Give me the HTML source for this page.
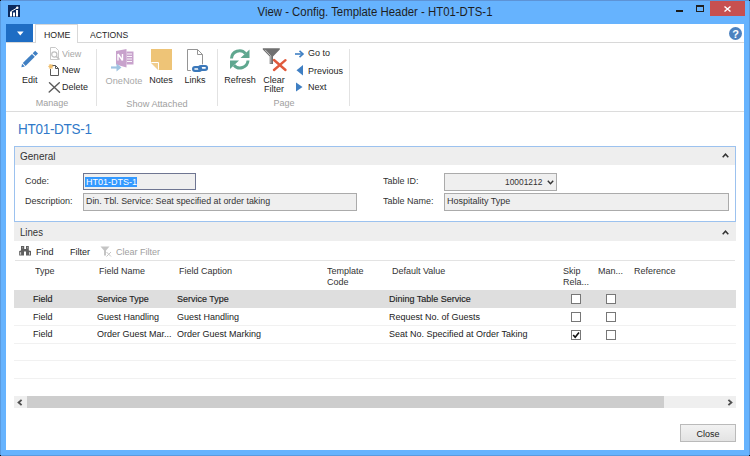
<!DOCTYPE html>
<html><head><meta charset="utf-8"><style>
html,body{margin:0;padding:0;width:750px;height:456px;overflow:hidden;font-family:"Liberation Sans", sans-serif;}
body{position:relative;}
</style></head><body>
<div style="position:absolute;left:0px;top:0px;width:750px;height:456px;background:#66b3fe"></div>
<div style="position:absolute;left:0px;top:0px;width:750px;height:1px;background:#5d93d6"></div>
<div style="position:absolute;left:0px;top:0px;width:1px;height:456px;background:#5a9be0"></div>
<div style="position:absolute;left:749px;top:0px;width:1px;height:456px;background:#5a9be0"></div>
<div style="position:absolute;left:0px;top:455px;width:750px;height:1px;background:#5a9be0"></div>
<div style="position:absolute;left:0px;top:0px;width:1px;height:1px;background:#111"></div>
<div style="position:absolute;left:749px;top:0px;width:1px;height:1px;background:#111"></div>
<div style="position:absolute;left:0px;top:455px;width:1px;height:1px;background:#111"></div>
<div style="position:absolute;left:749px;top:455px;width:1px;height:1px;background:#111"></div>
<svg style="position:absolute;left:8px;top:5px" width="12" height="12" viewBox="0 0 12 12"><rect width="12" height="12" fill="#0c2a5e"/><rect x="2" y="6.5" width="2" height="5" fill="#fff"/><rect x="5" y="7.5" width="2" height="4" fill="#fff"/><rect x="8" y="5" width="2" height="6.5" fill="#fff"/><path d="M3 6.5 L9 3" stroke="#fff" stroke-width="1"/><circle cx="9.3" cy="2.8" r="1.2" fill="#fff"/></svg>
<div style="position:absolute;left:375px;transform:translateX(-50%) scaleX(0.9259);transform-origin:50% 0;top:5.96px;font-size:12.31px;line-height:13.753px;color:#1e1e1e;font-weight:400;letter-spacing:0px;white-space:nowrap;">View - Config. Template Header - HT01-DTS-1</div>
<div style="position:absolute;left:676px;top:10px;width:7px;height:2px;background:#1a1a1a"></div>
<svg style="position:absolute;left:696px;top:5px" width="8" height="7" viewBox="0 0 8 7"><rect x="0.5" y="0.5" width="7" height="6" fill="none" stroke="#202020" stroke-width="1"/><rect x="0" y="0" width="8" height="2" fill="#202020"/></svg>
<div style="position:absolute;left:710px;top:1px;width:35px;height:15px;background:#c75050"></div>
<svg style="position:absolute;left:724px;top:6px" width="7" height="6" viewBox="0 0 7 6"><path d="M0.5 0.5 L6.5 5.5 M6.5 0.5 L0.5 5.5" stroke="#fff" stroke-width="1.4"/></svg>
<div style="position:absolute;left:6px;top:24px;width:738px;height:426px;background:#fff"></div>
<div style="position:absolute;left:6px;top:24px;width:27px;height:18px;background:#1e6dc4"></div>
<svg style="position:absolute;left:17px;top:31px" width="7" height="5" viewBox="0 0 7 5"><path d="M0 0.5 H6.6 L3.3 4.5 Z" fill="#fff"/></svg>
<div style="position:absolute;left:6px;top:42px;width:738px;height:1px;background:#d8d8d8"></div>
<div style="position:absolute;left:35px;top:24px;width:43px;height:19px;background:#fff;border:1px solid #d8d8d8;border-bottom:none;box-sizing:border-box"></div>
<div style="position:absolute;left:44px;transform:scaleX(0.9259);transform-origin:0 0;top:30.10px;font-size:9.50px;line-height:10.616px;color:#262626;font-weight:400;letter-spacing:0px;white-space:nowrap;">HOME</div>
<div style="position:absolute;left:90.4px;transform:scaleX(0.9259);transform-origin:0 0;top:30.29px;font-size:9.29px;line-height:10.375px;color:#262626;font-weight:400;letter-spacing:0px;white-space:nowrap;">ACTIONS</div>
<svg style="position:absolute;left:729px;top:27px" width="13" height="13" viewBox="0 0 13 13"><circle cx="6.5" cy="6.5" r="6.5" fill="#4d82c0"/><text x="6.5" y="10.8" font-family="Liberation Sans" font-weight="700" font-size="11" fill="#fff" text-anchor="middle">?</text></svg>
<div style="position:absolute;left:6px;top:111px;width:738px;height:1px;background:#dcdcdc"></div>
<div style="position:absolute;left:96px;top:49px;width:1px;height:57px;background:#e2e2e2"></div>
<div style="position:absolute;left:217px;top:49px;width:1px;height:57px;background:#e2e2e2"></div>
<div style="position:absolute;left:349px;top:49px;width:1px;height:57px;background:#e2e2e2"></div>
<svg style="position:absolute;left:16px;top:46px" width="26" height="26" viewBox="0 0 26 26"><g transform="translate(13.5,13.2) rotate(-45)"><path d="M-11.5 0 L-8.5 -2 L-8.5 2 Z" fill="#3f7fc3"/><rect x="-7.5" y="-2" width="13" height="4" fill="#3f7fc3"/><rect x="6.5" y="-2" width="3.5" height="4" fill="#3f7fc3"/></g></svg>
<div style="position:absolute;left:21.9px;transform:scaleX(0.9259);transform-origin:0 0;top:74.90px;font-size:9.72px;line-height:10.857px;color:#262626;font-weight:400;letter-spacing:0px;white-space:nowrap;">Edit</div>
<svg style="position:absolute;left:49px;top:47px" width="13" height="14" viewBox="0 0 13 14"><path d="M1.5 0.5 H6.5 L9.5 3.5 V12.5 H1.5 Z" fill="none" stroke="#c8c8c8"/><circle cx="5.3" cy="7.5" r="2.6" fill="#fff" stroke="#c0c0c0" stroke-width="1.2"/><path d="M7.2 9.4 L10.5 12.5" stroke="#c0c0c0" stroke-width="1.5"/></svg>
<div style="position:absolute;left:62.2px;transform:scaleX(0.9259);transform-origin:0 0;top:48.80px;font-size:9.72px;line-height:10.857px;color:#a8a8a8;font-weight:400;letter-spacing:0px;white-space:nowrap;">View</div>
<svg style="position:absolute;left:48px;top:63px" width="13" height="14" viewBox="0 0 13 14"><path d="M3.5 2.5 H7.5 L10.5 5.5 V12.5 H2.5 V6" fill="none" stroke="#5a5a5a"/><path d="M7.5 2.5 V5.5 H10.5" fill="none" stroke="#5a5a5a"/><path d="M2.8 1 V6 M0.3 3.5 H5.3 M1 1.7 L4.6 5.3 M4.6 1.7 L1 5.3" stroke="#f0c070" stroke-width="1.1"/></svg>
<div style="position:absolute;left:62.2px;transform:scaleX(0.9259);transform-origin:0 0;top:65.20px;font-size:9.72px;line-height:10.857px;color:#262626;font-weight:400;letter-spacing:0px;white-space:nowrap;">New</div>
<svg style="position:absolute;left:48px;top:82px" width="13" height="11" viewBox="0 0 13 11"><path d="M1.5 0.8 L11.5 10.2 M11.3 0.8 L1.2 10" stroke="#5a5a5a" stroke-width="1.4" stroke-linecap="round"/></svg>
<div style="position:absolute;left:62.2px;transform:scaleX(0.9259);transform-origin:0 0;top:81.80px;font-size:9.72px;line-height:10.857px;color:#262626;font-weight:400;letter-spacing:0px;white-space:nowrap;">Delete</div>
<div style="position:absolute;left:52.1px;transform:translateX(-50%) scaleX(0.9259);transform-origin:50% 0;top:97.90px;font-size:9.72px;line-height:10.857px;color:#a0a0a0;font-weight:400;letter-spacing:0px;white-space:nowrap;">Manage</div>
<svg style="position:absolute;left:110px;top:48px" width="25" height="25" viewBox="0 0 25 25"><path d="M6 3 L16.5 1 V19.5 L6 16.5 Z" fill="#c8a2cc"/><path d="M16.5 3.5 H23.5 V16.5 H16.5 Z" fill="#c8a2cc"/><path d="M17 6 H22 M17 8.5 H22 M17 11 H22 M17 13.5 H22" stroke="#fff" stroke-width="0.9"/><path d="M8 6 V12.5 M8 6 L12.5 12.5 M12.5 6 V12.5" stroke="#fff" stroke-width="1.4" fill="none"/><path d="M1 19.5 H8.5" stroke="#9fc4e2" stroke-width="2.2"/><path d="M6.5 15.5 L11.5 19.5 L6.5 23.5 Z" fill="#9fc4e2"/></svg>
<div style="position:absolute;left:123.8px;transform:translateX(-50%) scaleX(0.9259);transform-origin:50% 0;top:74.61px;font-size:9.94px;line-height:11.099px;color:#a8a8a8;font-weight:400;letter-spacing:0px;white-space:nowrap;">OneNote</div>
<svg style="position:absolute;left:151px;top:49px" width="21" height="21" viewBox="0 0 21 21"><path d="M0 0 H21 V21 H8 L0 13 Z" fill="#eec477"/><path d="M0.5 13.5 H7.5 V20.5" fill="none" stroke="#fff" stroke-width="1"/><path d="M0 14 H7 V21 Z" fill="#f0cd8e"/></svg>
<div style="position:absolute;left:161.3px;transform:translateX(-50%) scaleX(0.9259);transform-origin:50% 0;top:74.80px;font-size:9.72px;line-height:10.857px;color:#262626;font-weight:400;letter-spacing:0px;white-space:nowrap;">Notes</div>
<svg style="position:absolute;left:184px;top:46px" width="26" height="28" viewBox="0 0 26 28"><path d="M6.8 24.5 H3.5 V3.5 H13.5 L18.5 8.5 V18.3" fill="none" stroke="#959595"/><path d="M13.5 3.5 V8.5 H18.5" fill="none" stroke="#959595"/><rect x="9.1" y="21.1" width="8" height="3.8" rx="1.9" fill="none" stroke="#3b78ba" stroke-width="2.2"/><rect x="15" y="20" width="8" height="3.8" rx="1.9" fill="none" stroke="#3b78ba" stroke-width="2.2"/></svg>
<div style="position:absolute;left:195.4px;transform:translateX(-50%) scaleX(0.9259);transform-origin:50% 0;top:74.80px;font-size:9.72px;line-height:10.857px;color:#262626;font-weight:400;letter-spacing:0px;white-space:nowrap;">Links</div>
<div style="position:absolute;left:157.3px;transform:translateX(-50%) scaleX(0.9259);transform-origin:50% 0;top:98.21px;font-size:9.94px;line-height:11.099px;color:#a0a0a0;font-weight:400;letter-spacing:0px;white-space:nowrap;">Show Attached</div>
<svg style="position:absolute;left:227px;top:46px" width="26" height="26" viewBox="0 0 26 26"><path d="M4.5 12.5 A8 8 0 0 1 18.6 7.6" fill="none" stroke="#5fa78f" stroke-width="3"/><path d="M13.5 12 H22.5 V3.5 Z" fill="#5fa78f"/><path d="M21 14.5 A8 8 0 0 1 7 19.2" fill="none" stroke="#5fa78f" stroke-width="3"/><path d="M3 14.5 H12 L3 23 Z" fill="#5fa78f"/></svg>
<div style="position:absolute;left:240.2px;transform:translateX(-50%) scaleX(0.9259);transform-origin:50% 0;top:75.00px;font-size:9.72px;line-height:10.857px;color:#262626;font-weight:400;letter-spacing:0px;white-space:nowrap;">Refresh</div>
<svg style="position:absolute;left:260px;top:46px" width="28" height="27" viewBox="0 0 28 27"><path d="M2.8 2.3 H19.8 V3.6 L13 10.5 V18 H9.7 V10.5 L2.8 3.6 Z" fill="#707070"/><path d="M5 3.8 L10.8 9.8 V17.5" stroke="#c8c8c8" stroke-width="0.9" fill="none"/><path d="M14 14 L25.5 24 M25.5 14.2 L14 24" stroke="#e05a3c" stroke-width="2.4" stroke-linecap="round"/></svg>
<div style="position:absolute;left:273.5px;transform:translateX(-50%) scaleX(0.9259);transform-origin:50% 0;top:75.00px;font-size:9.72px;line-height:10.857px;color:#262626;font-weight:400;letter-spacing:0px;white-space:nowrap;">Clear</div>
<div style="position:absolute;left:274px;transform:translateX(-50%) scaleX(0.9259);transform-origin:50% 0;top:84.40px;font-size:9.72px;line-height:10.857px;color:#262626;font-weight:400;letter-spacing:0px;white-space:nowrap;">Filter</div>
<svg style="position:absolute;left:294px;top:50px" width="11" height="8" viewBox="0 0 11 8"><path d="M1 4 H9" stroke="#3f7fc3" stroke-width="1.6"/><path d="M5.5 0.8 L9 4 L5.5 7.2" fill="none" stroke="#3f7fc3" stroke-width="1.6"/></svg>
<div style="position:absolute;left:307.8px;transform:scaleX(0.9259);transform-origin:0 0;top:48.40px;font-size:9.72px;line-height:10.857px;color:#262626;font-weight:400;letter-spacing:0px;white-space:nowrap;">Go to</div>
<svg style="position:absolute;left:296px;top:65px" width="7" height="11" viewBox="0 0 7 11"><path d="M7 0 V10.5 L0.5 5.25 Z" fill="#3f7fc3"/></svg>
<div style="position:absolute;left:307.8px;transform:scaleX(0.9259);transform-origin:0 0;top:65.60px;font-size:9.72px;line-height:10.857px;color:#262626;font-weight:400;letter-spacing:0px;white-space:nowrap;">Previous</div>
<svg style="position:absolute;left:296px;top:82px" width="7" height="10" viewBox="0 0 7 10"><path d="M0 0.5 V9.5 L6.5 5 Z" fill="#3f7fc3"/></svg>
<div style="position:absolute;left:307.8px;transform:scaleX(0.9259);transform-origin:0 0;top:82.00px;font-size:9.72px;line-height:10.857px;color:#262626;font-weight:400;letter-spacing:0px;white-space:nowrap;">Next</div>
<div style="position:absolute;left:284.1px;transform:translateX(-50%) scaleX(0.9259);transform-origin:50% 0;top:97.80px;font-size:9.72px;line-height:10.857px;color:#a0a0a0;font-weight:400;letter-spacing:0px;white-space:nowrap;">Page</div>
<div style="position:absolute;left:18.4px;transform:scaleX(0.9259);transform-origin:0 0;top:120.81px;font-size:14.58px;line-height:16.286px;color:#3079c9;font-weight:400;letter-spacing:-0.3px;white-space:nowrap;">HT01-DTS-1</div>
<div style="position:absolute;left:14px;top:146px;width:722px;height:76px;border:1px solid #9cc2ef;box-sizing:border-box"></div>
<div style="position:absolute;left:15px;top:147px;width:720px;height:18px;background:#eeeeee"></div>
<div style="position:absolute;left:19.5px;transform:scaleX(0.9259);transform-origin:0 0;top:150.03px;font-size:10.80px;line-height:12.064px;color:#333;font-weight:400;letter-spacing:0px;white-space:nowrap;">General</div>
<svg style="position:absolute;left:722px;top:153px" width="7" height="5" viewBox="0 0 7 5"><path d="M0.7 4.3 L3.5 1.2 L6.3 4.3" fill="none" stroke="#333" stroke-width="1.5"/></svg>
<div style="position:absolute;left:24.8px;transform:scaleX(0.9259);transform-origin:0 0;top:176.40px;font-size:9.72px;line-height:10.857px;color:#333;font-weight:400;letter-spacing:0px;white-space:nowrap;">Code:</div>
<div style="position:absolute;left:83px;top:173px;width:113px;height:17px;background:#efefef;border:1px solid #6e7591;box-sizing:border-box"></div>
<div style="position:absolute;left:85px;top:176.5px;width:52px;height:10px;background:#3399ff"></div>
<div style="position:absolute;left:86px;transform:scaleX(0.9259);transform-origin:0 0;top:176.60px;font-size:9.72px;line-height:10.857px;color:#fff;font-weight:400;letter-spacing:0px;white-space:nowrap;">HT01-DTS-1</div>
<div style="position:absolute;left:24.8px;transform:scaleX(0.9259);transform-origin:0 0;top:195.80px;font-size:9.72px;line-height:10.857px;color:#333;font-weight:400;letter-spacing:0px;white-space:nowrap;">Description:</div>
<div style="position:absolute;left:83px;top:193px;width:274px;height:18px;background:#efefef;border:1px solid #ababab;box-sizing:border-box"></div>
<div style="position:absolute;left:86px;transform:scaleX(0.9259);transform-origin:0 0;top:195.95px;font-size:9.56px;line-height:10.676px;color:#333;font-weight:400;letter-spacing:0px;white-space:nowrap;">Din. Tbl. Service: Seat specified at order taking</div>
<div style="position:absolute;left:382.8px;transform:scaleX(0.9259);transform-origin:0 0;top:176.40px;font-size:9.72px;line-height:10.857px;color:#333;font-weight:400;letter-spacing:0px;white-space:nowrap;">Table ID:</div>
<div style="position:absolute;left:444px;top:173px;width:113px;height:18px;background:#efefef;border:1px solid #ababab;box-sizing:border-box"></div>
<div style="position:absolute;right:207.20000000000005px;transform:scaleX(0.9259);transform-origin:100% 0;top:177.19px;font-size:9.07px;line-height:10.133px;color:#333;font-weight:400;letter-spacing:0px;white-space:nowrap;">10001212</div>
<svg style="position:absolute;left:547px;top:180px" width="7" height="5" viewBox="0 0 7 5"><path d="M0.8 0.8 L3.5 3.8 L6.2 0.8" fill="none" stroke="#333" stroke-width="1.4"/></svg>
<div style="position:absolute;left:382.8px;transform:scaleX(0.9259);transform-origin:0 0;top:196.40px;font-size:9.72px;line-height:10.857px;color:#333;font-weight:400;letter-spacing:0px;white-space:nowrap;">Table Name:</div>
<div style="position:absolute;left:444px;top:193px;width:285px;height:18px;background:#efefef;border:1px solid #ababab;box-sizing:border-box"></div>
<div style="position:absolute;left:446.8px;transform:scaleX(0.9259);transform-origin:0 0;top:196.40px;font-size:9.72px;line-height:10.857px;color:#333;font-weight:400;letter-spacing:0px;white-space:nowrap;">Hospitality Type</div>
<div style="position:absolute;left:14px;top:222px;width:722px;height:19px;background:#eeeeee"></div>
<div style="position:absolute;left:19.7px;transform:scaleX(0.9259);transform-origin:0 0;top:226.62px;font-size:10.37px;line-height:11.581px;color:#333;font-weight:400;letter-spacing:0px;white-space:nowrap;">Lines</div>
<svg style="position:absolute;left:722px;top:229.5px" width="7" height="5" viewBox="0 0 7 5"><path d="M0.7 4.3 L3.5 1.2 L6.3 4.3" fill="none" stroke="#333" stroke-width="1.5"/></svg>
<svg style="position:absolute;left:16px;top:243px" width="18" height="16" viewBox="0 0 18 16"><path d="M5 3 H8.2 V6 H10 V3 H12.8 V7.5 L15 8 V12.6 H10 V8.5 H8 V12.6 H3.2 V8 L5 7.5 Z" fill="#5e5e5e"/><rect x="4.2" y="9.2" width="0.9" height="2.5" fill="#e8e8e8"/><rect x="13" y="9.2" width="0.9" height="2.5" fill="#e8e8e8"/><rect x="6" y="4" width="0.8" height="1.5" fill="#aaa"/><rect x="11" y="4" width="0.8" height="1.5" fill="#aaa"/></svg>
<div style="position:absolute;left:35.6px;transform:scaleX(0.9259);transform-origin:0 0;top:246.80px;font-size:9.72px;line-height:10.857px;color:#262626;font-weight:400;letter-spacing:0px;white-space:nowrap;">Find</div>
<div style="position:absolute;left:70px;transform:scaleX(0.9259);transform-origin:0 0;top:246.80px;font-size:9.72px;line-height:10.857px;color:#262626;font-weight:400;letter-spacing:0px;white-space:nowrap;">Filter</div>
<svg style="position:absolute;left:100px;top:246px" width="12" height="11" viewBox="0 0 12 11"><path d="M0.5 0.5 H9.5 L6 4.5 V9.5 H4 V4.5 Z" fill="#c4c4c4"/><path d="M6.5 6 L11 10.5 M11 6 L6.5 10.5" stroke="#c4c4c4" stroke-width="1"/></svg>
<div style="position:absolute;left:116px;transform:scaleX(0.9259);transform-origin:0 0;top:246.80px;font-size:9.72px;line-height:10.857px;color:#a0a0a0;font-weight:400;letter-spacing:0px;white-space:nowrap;">Clear Filter</div>
<div style="position:absolute;left:15px;top:260px;width:720px;height:1px;background:#e3e3e3"></div>
<div style="position:absolute;left:35.3px;transform:scaleX(0.9259);transform-origin:0 0;top:265.80px;font-size:9.72px;line-height:10.857px;color:#333;font-weight:400;letter-spacing:0px;white-space:nowrap;">Type</div>
<div style="position:absolute;left:99.1px;transform:scaleX(0.9259);transform-origin:0 0;top:265.80px;font-size:9.72px;line-height:10.857px;color:#333;font-weight:400;letter-spacing:0px;white-space:nowrap;">Field Name</div>
<div style="position:absolute;left:178.6px;transform:scaleX(0.9259);transform-origin:0 0;top:265.80px;font-size:9.72px;line-height:10.857px;color:#333;font-weight:400;letter-spacing:0px;white-space:nowrap;">Field Caption</div>
<div style="position:absolute;left:327.4px;transform:scaleX(0.9259);transform-origin:0 0;top:265.80px;font-size:9.72px;line-height:10.857px;color:#333;font-weight:400;letter-spacing:0px;white-space:nowrap;">Template</div>
<div style="position:absolute;left:392px;transform:scaleX(0.9259);transform-origin:0 0;top:265.80px;font-size:9.72px;line-height:10.857px;color:#333;font-weight:400;letter-spacing:0px;white-space:nowrap;">Default Value</div>
<div style="position:absolute;left:563.2px;transform:scaleX(0.9259);transform-origin:0 0;top:265.80px;font-size:9.72px;line-height:10.857px;color:#333;font-weight:400;letter-spacing:0px;white-space:nowrap;">Skip</div>
<div style="position:absolute;left:598px;transform:scaleX(0.9259);transform-origin:0 0;top:265.80px;font-size:9.72px;line-height:10.857px;color:#333;font-weight:400;letter-spacing:0px;white-space:nowrap;">Man...</div>
<div style="position:absolute;left:634px;transform:scaleX(0.9259);transform-origin:0 0;top:265.80px;font-size:9.72px;line-height:10.857px;color:#333;font-weight:400;letter-spacing:0px;white-space:nowrap;">Reference</div>
<div style="position:absolute;left:327.4px;transform:scaleX(0.9259);transform-origin:0 0;top:277.00px;font-size:9.72px;line-height:10.857px;color:#333;font-weight:400;letter-spacing:0px;white-space:nowrap;">Code</div>
<div style="position:absolute;left:563.2px;transform:scaleX(0.9259);transform-origin:0 0;top:277.00px;font-size:9.72px;line-height:10.857px;color:#333;font-weight:400;letter-spacing:0px;white-space:nowrap;">Rela...</div>
<div style="position:absolute;left:14px;top:290px;width:722px;height:18px;background:#dedede"></div>
<div style="position:absolute;left:14px;top:325px;width:722px;height:1px;background:#f1f1f1"></div>
<div style="position:absolute;left:14px;top:343px;width:722px;height:1px;background:#f1f1f1"></div>
<div style="position:absolute;left:14px;top:360px;width:722px;height:1px;background:#f1f1f1"></div>
<div style="position:absolute;left:14px;top:378px;width:722px;height:1px;background:#f1f1f1"></div>
<div style="position:absolute;left:32.9px;transform:scaleX(0.9259);transform-origin:0 0;top:293.90px;font-size:9.72px;line-height:10.857px;color:#222;font-weight:400;letter-spacing:0px;white-space:nowrap;-webkit-text-stroke:0.15px #222;">Field</div>
<div style="position:absolute;left:96.7px;transform:scaleX(0.9259);transform-origin:0 0;top:293.90px;font-size:9.72px;line-height:10.857px;color:#222;font-weight:400;letter-spacing:0px;white-space:nowrap;-webkit-text-stroke:0.15px #222;">Service Type</div>
<div style="position:absolute;left:176.6px;transform:scaleX(0.9259);transform-origin:0 0;top:293.90px;font-size:9.72px;line-height:10.857px;color:#222;font-weight:400;letter-spacing:0px;white-space:nowrap;-webkit-text-stroke:0.15px #222;">Service Type</div>
<div style="position:absolute;left:389.2px;transform:scaleX(0.9259);transform-origin:0 0;top:293.90px;font-size:9.72px;line-height:10.857px;color:#222;font-weight:400;letter-spacing:0px;white-space:nowrap;-webkit-text-stroke:0.15px #222;">Dining Table Service</div>
<div style="position:absolute;left:571px;top:294px;width:10px;height:10px;background:#fff;border:1px solid #777;box-sizing:border-box"></div>
<div style="position:absolute;left:606px;top:294px;width:10px;height:10px;background:#fff;border:1px solid #777;box-sizing:border-box"></div>
<div style="position:absolute;left:32.9px;transform:scaleX(0.9259);transform-origin:0 0;top:311.70px;font-size:9.72px;line-height:10.857px;color:#222;font-weight:400;letter-spacing:0px;white-space:nowrap;">Field</div>
<div style="position:absolute;left:96.7px;transform:scaleX(0.9259);transform-origin:0 0;top:311.70px;font-size:9.72px;line-height:10.857px;color:#222;font-weight:400;letter-spacing:0px;white-space:nowrap;">Guest Handling</div>
<div style="position:absolute;left:176.6px;transform:scaleX(0.9259);transform-origin:0 0;top:311.70px;font-size:9.72px;line-height:10.857px;color:#222;font-weight:400;letter-spacing:0px;white-space:nowrap;">Guest Handling</div>
<div style="position:absolute;left:389.2px;transform:scaleX(0.9259);transform-origin:0 0;top:311.70px;font-size:9.72px;line-height:10.857px;color:#222;font-weight:400;letter-spacing:0px;white-space:nowrap;">Request No. of Guests</div>
<div style="position:absolute;left:571px;top:312px;width:10px;height:10px;background:#fff;border:1px solid #777;box-sizing:border-box"></div>
<div style="position:absolute;left:606px;top:312px;width:10px;height:10px;background:#fff;border:1px solid #777;box-sizing:border-box"></div>
<div style="position:absolute;left:32.9px;transform:scaleX(0.9259);transform-origin:0 0;top:328.70px;font-size:9.72px;line-height:10.857px;color:#222;font-weight:400;letter-spacing:0px;white-space:nowrap;">Field</div>
<div style="position:absolute;left:96.7px;transform:scaleX(0.9259);transform-origin:0 0;top:328.70px;font-size:9.72px;line-height:10.857px;color:#222;font-weight:400;letter-spacing:0px;white-space:nowrap;">Order Guest Mar...</div>
<div style="position:absolute;left:176.6px;transform:scaleX(0.9259);transform-origin:0 0;top:328.70px;font-size:9.72px;line-height:10.857px;color:#222;font-weight:400;letter-spacing:0px;white-space:nowrap;">Order Guest Marking</div>
<div style="position:absolute;left:389.2px;transform:scaleX(0.9259);transform-origin:0 0;top:328.70px;font-size:9.72px;line-height:10.857px;color:#222;font-weight:400;letter-spacing:0px;white-space:nowrap;">Seat No. Specified at Order Taking</div>
<div style="position:absolute;left:571px;top:330px;width:10px;height:10px;background:#fff;border:1px solid #777;box-sizing:border-box"></div>
<div style="position:absolute;left:606px;top:330px;width:10px;height:10px;background:#fff;border:1px solid #777;box-sizing:border-box"></div>
<svg style="position:absolute;left:571px;top:330px" width="10" height="10" viewBox="0 0 10 10"><path d="M2.2 5 L4.2 7.3 L8 2.5" fill="none" stroke="#111" stroke-width="1.6"/></svg>
<div style="position:absolute;left:14px;top:396px;width:722px;height:12px;background:#efefef"></div>
<div style="position:absolute;left:27px;top:396px;width:637px;height:12px;background:#cdcdcd"></div>
<svg style="position:absolute;left:17px;top:398.5px" width="6" height="7" viewBox="0 0 6 7"><path d="M4.6 0.9 L1.6 3.5 L4.6 6.1" fill="none" stroke="#505050" stroke-width="1.9"/></svg>
<svg style="position:absolute;left:727px;top:398.5px" width="6" height="7" viewBox="0 0 6 7"><path d="M1.4 0.9 L4.4 3.5 L1.4 6.1" fill="none" stroke="#505050" stroke-width="1.9"/></svg>
<div style="position:absolute;left:680px;top:424px;width:56px;height:18px;background:linear-gradient(#f2f2f2,#e3e3e3);border:1px solid #bababa;box-sizing:border-box"></div>
<div style="position:absolute;left:707.7px;transform:translateX(-50%) scaleX(0.9259);transform-origin:50% 0;top:428.60px;font-size:9.72px;line-height:10.857px;color:#222;font-weight:400;letter-spacing:0px;white-space:nowrap;">Close</div>
</body></html>
